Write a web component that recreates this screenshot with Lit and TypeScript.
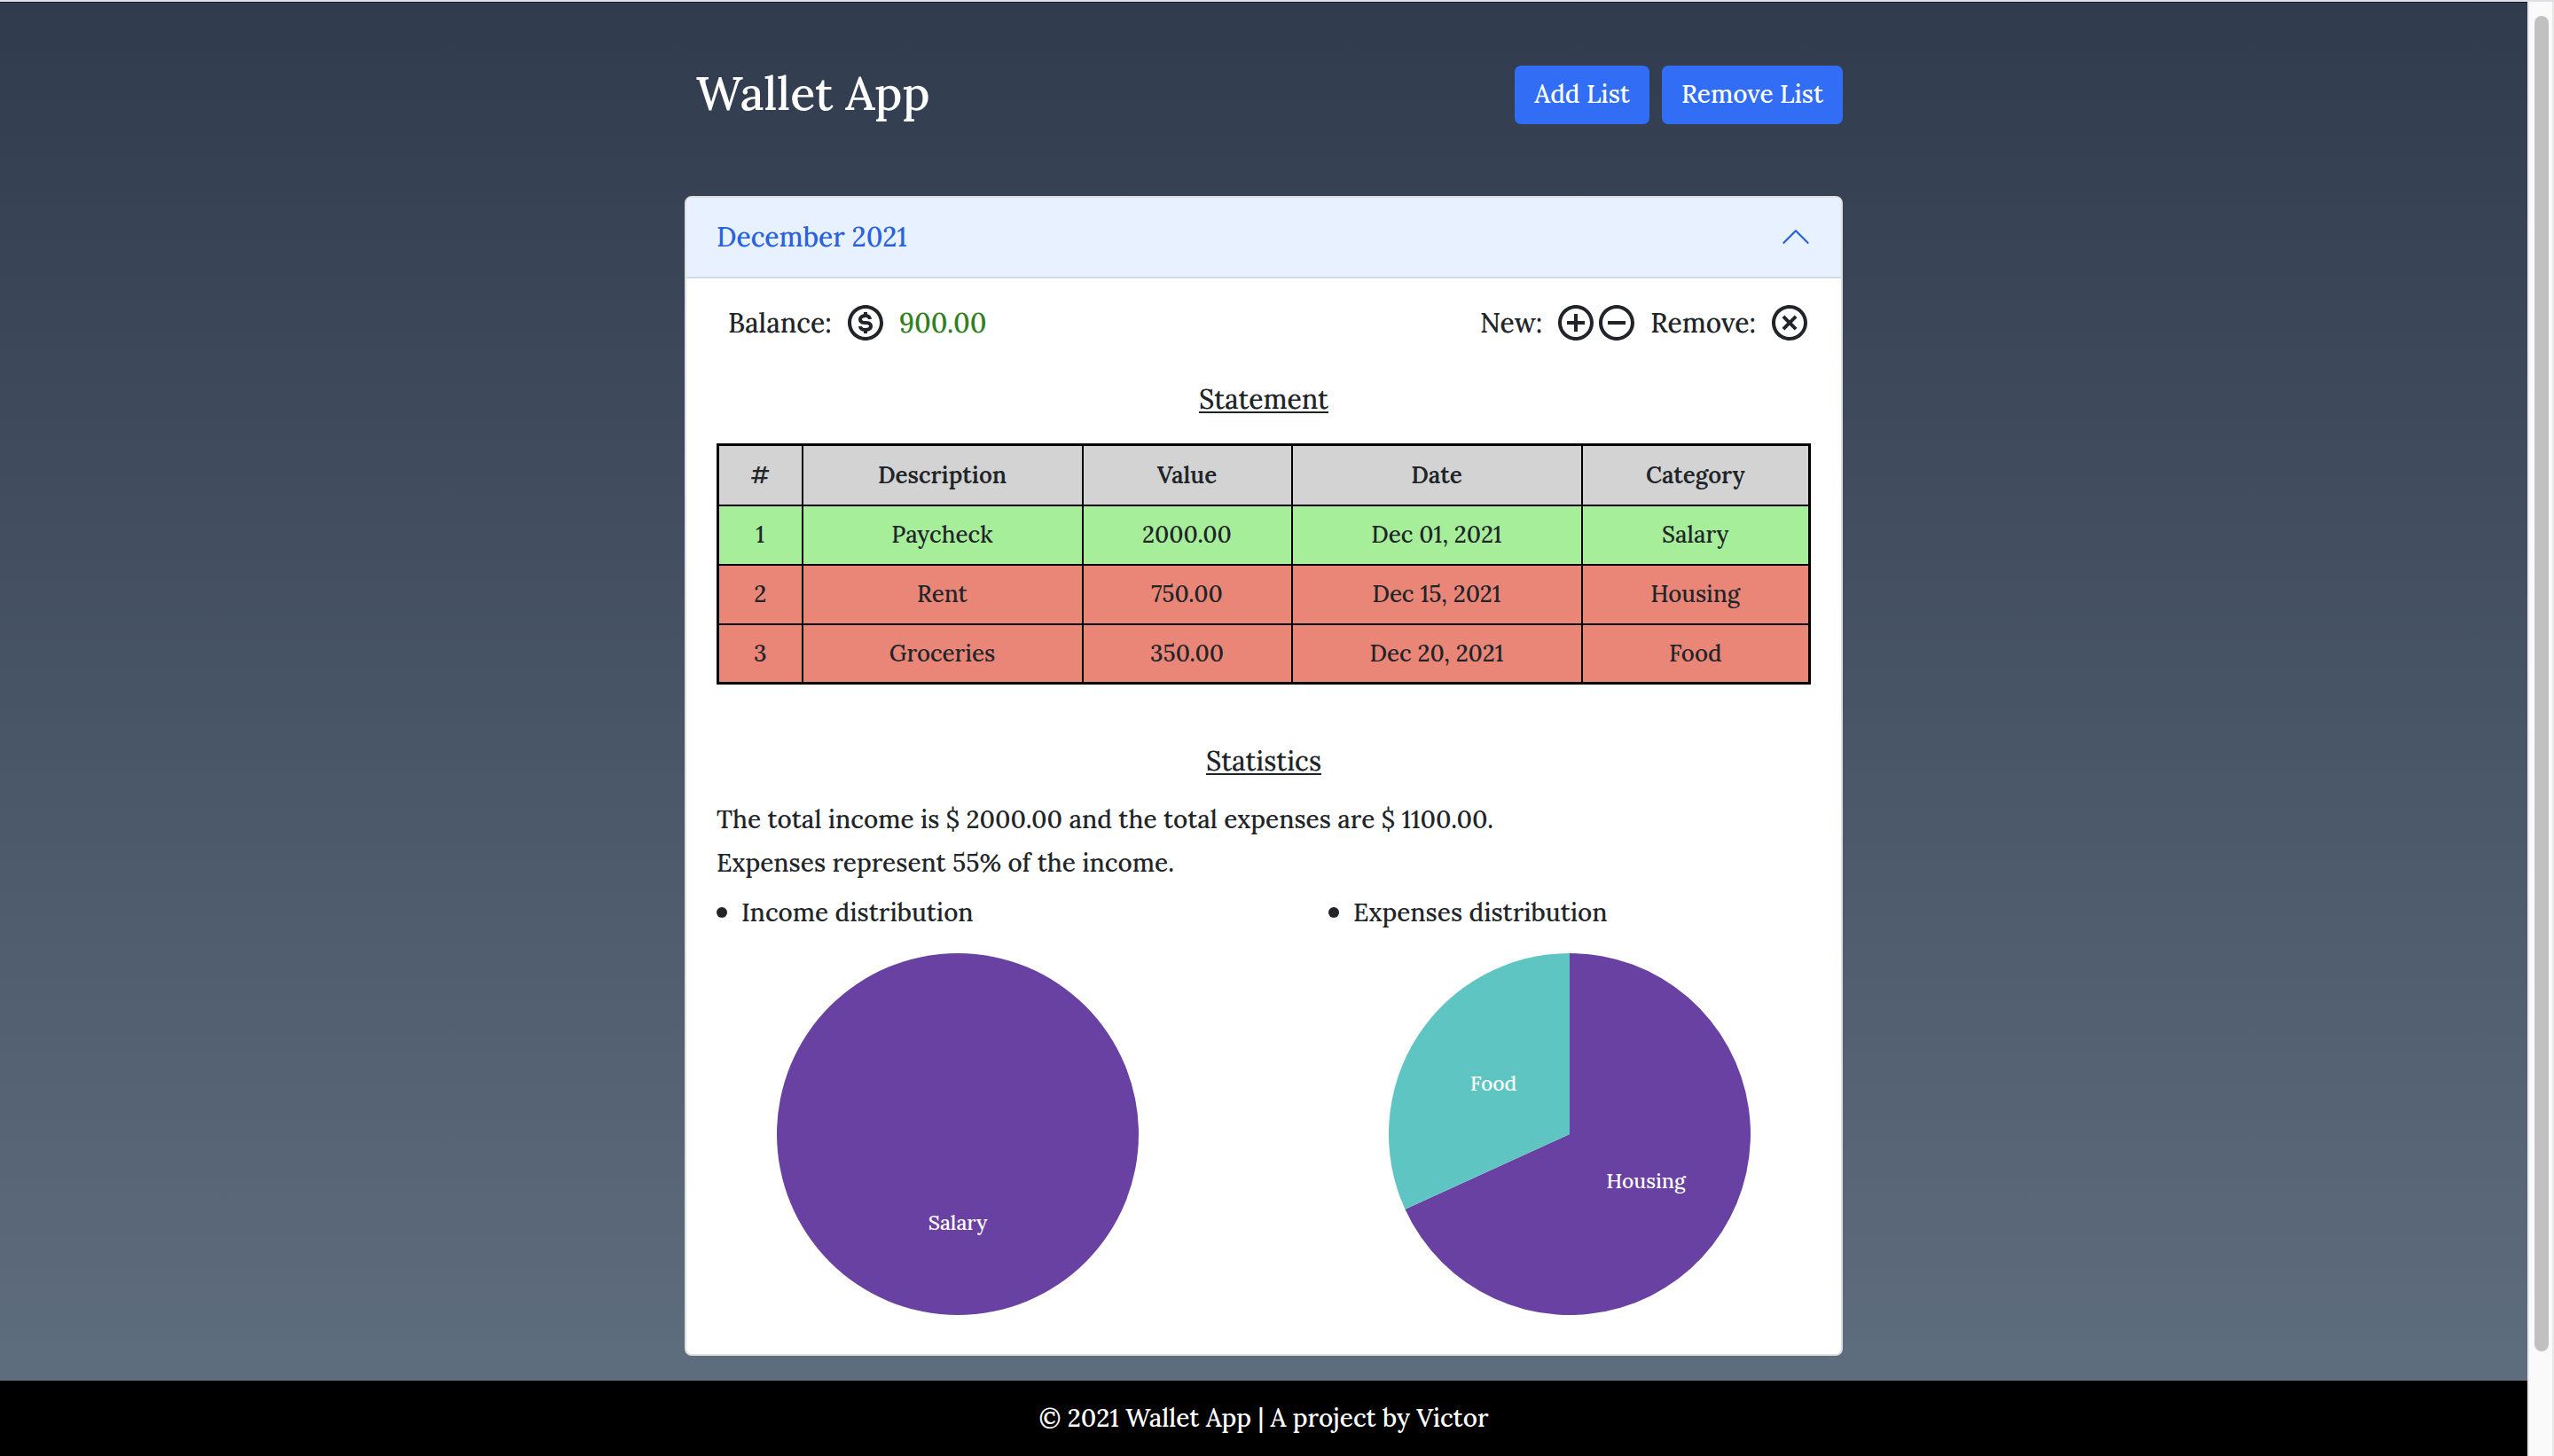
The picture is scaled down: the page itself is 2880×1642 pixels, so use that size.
import { LitElement, html, css, svg } from "lit";
import { customElement, property, state } from "lit/decorators.js";

interface Entry {
  description: string;
  value: number;
  date: string;
  category: string;
  kind: "income" | "expense";
}

interface Slice {
  label: string;
  value: number;
}

const PIE_COLORS = ["#6841a3", "#5fc5c2"];

const ICONS = {
  dollar:
    "M12 11c-2 0-2-.63-2-1s.7-1 2-1 1.39.64 1.4 1h2A3 3 0 0 0 13 7.12V6h-2v1.09C9 7.42 8 8.71 8 10c0 1.12.52 3 4 3 2 0 2 .68 2 1s-.62 1-2 1c-1.84 0-2-.86-2-1H8c0 .92.66 2.55 3 2.92V18h2v-1.08c2-.34 3-1.63 3-2.92 0-1.12-.52-3-4-3z",
  plus: "M13 7h-2v4H7v2h4v4h2v-4h4v-2h-4z",
  minus: "M7 11h10v2H7z",
  cross:
    "M9.172 16.242 12 13.414l2.828 2.828 1.414-1.414L13.414 12l2.828-2.828-1.414-1.414L12 10.586 9.172 7.758 7.758 9.172 10.586 12l-2.828 2.828z",
};

@customElement("circle-icon")
export class CircleIcon extends LitElement {
  static styles = css`
    :host {
      display: block;
      width: 40px;
      height: 40px;
    }
    .icon {
      display: block;
      width: 100%;
      height: 100%;
      fill: currentColor;
    }
  `;

  @property() name: keyof typeof ICONS = "plus";

  render() {
    return html`<svg class="icon" viewBox="2 2 20 20" aria-hidden="true">
      <path
        d="M12 2C6.486 2 2 6.486 2 12s4.486 10 10 10 10-4.486 10-10S17.514 2 12 2zm0 18c-4.411 0-8-3.589-8-8s3.589-8 8-8 8 3.589 8 8-3.589 8-8 8z"
      ></path>
      <path d=${ICONS[this.name]}></path>
    </svg>`;
  }
}

@customElement("pie-chart")
export class PieChart extends LitElement {
  static styles = css`
    :host {
      display: block;
      width: 408px;
      max-width: 100%;
    }
    .pie {
      display: block;
      width: 100%;
    }
    .label {
      fill: #fff;
      font-size: 23px;
      text-anchor: middle;
    }
  `;

  @property({ attribute: false }) slices: Slice[] = [];

  render() {
    const total = this.slices.reduce((sum, s) => sum + s.value, 0);
    const radius = 204;
    const point = (turn: number, r: number) => [
      r * Math.sin(turn * 2 * Math.PI),
      -r * Math.cos(turn * 2 * Math.PI),
    ];
    let turn = 0;
    const parts = this.slices.map((slice, i) => {
      const share = slice.value / total;
      const [x1, y1] = point(turn, radius);
      const [x2, y2] = point(turn + share, radius);
      const [lx, ly] = point(turn + share / 2, radius / 2);
      turn += share;
      const fill = PIE_COLORS[i % PIE_COLORS.length];
      const shape =
        share === 1
          ? svg`<circle r=${radius} fill=${fill}></circle>`
          : svg`<path fill=${fill} d=${`M0 0L${x1} ${y1}A${radius} ${radius} 0 ${
              share > 0.5 ? 1 : 0
            } 1 ${x2} ${y2}Z`}></path>`;
      return svg`${shape}<text class="label" x=${Math.round(lx)} y=${Math.round(ly) + 6}>${slice.label}</text>`;
    });
    return html`<svg class="pie" viewBox="-204 -204 408 408" role="img">${parts}</svg>`;
  }
}

@customElement("app-root")
export class AppRoot extends LitElement {
  static styles = css`
    :host {
      display: flex;
      flex-direction: column;
      min-height: 100vh;
      font-family: Lora, "Liberation Serif", serif;
      font-size: 28px;
      font-weight: 500;
      line-height: 48px;
      color: #212529;
    }
    * {
      box-sizing: border-box;
    }
    h1,
    h2,
    h3,
    p,
    ul {
      margin: 0;
      padding: 0;
      font-weight: 500;
    }
    button {
      margin: 0;
      padding: 0;
      border: 0;
      background: none;
      color: inherit;
      font: inherit;
      cursor: pointer;
    }
    .edge {
      height: 2px;
      background: #dedfe7;
    }
    .window {
      flex: 1;
      display: flex;
    }
    .page {
      flex: 1;
      display: flex;
      flex-direction: column;
      border-top: 1px solid #101a2e;
      background: linear-gradient(#303b4e, #617081);
    }
    .content {
      flex: 1;
      width: 100%;
      max-width: 1306px;
      margin: 0 auto;
      padding: 71px 0 28px;
    }
    .top {
      display: flex;
      align-items: center;
      justify-content: space-between;
      margin-bottom: 81px;
    }
    .title {
      padding: 0 0 4px 13px;
      font-size: 52px;
      line-height: 60px;
      color: #fff;
    }
    .actions {
      display: flex;
      gap: 14px;
    }
    .action {
      padding: 8px 22px 10px;
      border-radius: 7px;
      background: #316df5;
      color: #fff;
    }
    .card {
      overflow: hidden;
      border: 2px solid #dfdfdf;
      border-radius: 8px;
      background: #fff;
    }
    .month {
      display: flex;
      align-items: center;
      justify-content: space-between;
      width: 100%;
      padding: 20px 34px 21px;
      border-bottom: 2px solid #d2dbe9;
      background: #e7f1ff;
      color: #2a61dd;
      font-size: 30px;
    }
    .chevron {
      width: 36px;
      height: 36px;
      margin-right: -1px;
      fill: none;
      stroke: currentColor;
      stroke-width: 1;
      stroke-linecap: round;
      stroke-linejoin: round;
    }
    .body {
      padding: 30px 34px 44px;
    }
    .summary {
      display: flex;
      align-items: center;
      justify-content: space-between;
      padding: 0 4px 0 13px;
      font-size: 30px;
      line-height: 40px;
    }
    .group {
      display: flex;
      align-items: center;
      gap: 18px;
    }
    .pair {
      display: flex;
      gap: 6px;
    }
    .amount {
      color: #31801f;
    }
    .heading {
      text-align: center;
      text-decoration: underline;
      text-decoration-thickness: 2px;
      text-underline-offset: 3px;
      font-size: 30px;
    }
    .statement {
      margin: 42px 0 26px;
    }
    .statistics {
      margin: 62px 0 18px;
    }
    .table {
      width: 100%;
      table-layout: fixed;
      border-collapse: collapse;
      border: 3px solid #000;
      text-align: center;
      font-size: 26px;
    }
    .table th,
    .table td {
      height: 67px;
      padding: 0;
      border: 2px solid #000;
    }
    .table th {
      height: 68px;
      background: #d3d3d3;
      font-weight: 600;
    }
    .num {
      width: 95px;
    }
    .desc {
      width: 316px;
    }
    .val {
      width: 236px;
    }
    .day {
      width: 327px;
    }
    .income {
      background: #a6ee9a;
    }
    .expense {
      background: #ea8677;
    }
    .line {
      line-height: 49px;
    }
    .charts {
      display: flex;
      flex-wrap: wrap;
      justify-content: space-between;
      margin-top: 7px;
      list-style: none;
    }
    .chart {
      display: flex;
      flex-direction: column;
      align-items: center;
      gap: 22px;
      width: 544px;
    }
    .caption {
      display: flex;
      align-items: center;
      align-self: stretch;
      gap: 16px;
    }
    .caption::before {
      content: "";
      width: 12px;
      height: 12px;
      border-radius: 50%;
      background: currentColor;
    }
    .footer {
      padding: 18px 0 19px;
      background: #000;
      color: #fff;
      text-align: center;
    }
    .scroll {
      display: flex;
      width: 30px;
      padding: 16px 4px 118px 6px;
      border: solid #e8e8e8;
      border-width: 0 2px;
      background: #fafafa;
    }
    .thumb {
      flex: 1;
      border-radius: 8px;
      background: #c1c1c1;
    }
  `;

  @state() private open = true;

  private entries: Entry[] = [
    { description: "Paycheck", value: 2000, date: "Dec 01, 2021", category: "Salary", kind: "income" },
    { description: "Rent", value: 750, date: "Dec 15, 2021", category: "Housing", kind: "expense" },
    { description: "Groceries", value: 350, date: "Dec 20, 2021", category: "Food", kind: "expense" },
  ];

  private slices(kind: Entry["kind"]): Slice[] {
    return this.entries
      .filter((e) => e.kind === kind)
      .map((e) => ({ label: e.category, value: e.value }));
  }

  private renderBody() {
    const sum = (slices: Slice[]) => slices.reduce((t, s) => t + s.value, 0);
    const incomeSlices = this.slices("income");
    const expenseSlices = this.slices("expense");
    const income = sum(incomeSlices);
    const expenses = sum(expenseSlices);
    return html`<div class="body">
      <div class="summary">
        <div class="group">
          <span>Balance:</span>
          <circle-icon name="dollar"></circle-icon>
          <span class="amount">${(income - expenses).toFixed(2)}</span>
        </div>
        <div class="group">
          <span>New:</span>
          <div class="pair">
            <button aria-label="New income"><circle-icon name="plus"></circle-icon></button>
            <button aria-label="New expense"><circle-icon name="minus"></circle-icon></button>
          </div>
          <span>Remove:</span>
          <button aria-label="Remove entry"><circle-icon name="cross"></circle-icon></button>
        </div>
      </div>
      <h3 class="heading statement">Statement</h3>
      <table class="table">
        <thead>
          <tr>
            <th class="num" scope="col">#</th>
            <th class="desc" scope="col">Description</th>
            <th class="val" scope="col">Value</th>
            <th class="day" scope="col">Date</th>
            <th scope="col">Category</th>
          </tr>
        </thead>
        <tbody>
          ${this.entries.map(
            (e, i) => html`<tr class=${e.kind}>
              <td>${i + 1}</td>
              <td>${e.description}</td>
              <td>${e.value.toFixed(2)}</td>
              <td>${e.date}</td>
              <td>${e.category}</td>
            </tr>`
          )}
        </tbody>
      </table>
      <h3 class="heading statistics">Statistics</h3>
      <p class="line">
        The total income is $ ${income.toFixed(2)} and the total expenses are $ ${expenses.toFixed(2)}.
      </p>
      <p class="line">Expenses represent ${Math.round((expenses / income) * 100)}% of the income.</p>
      <ul class="charts">
        <li class="chart">
          <span class="caption">Income distribution</span>
          <pie-chart .slices=${incomeSlices}></pie-chart>
        </li>
        <li class="chart">
          <span class="caption">Expenses distribution</span>
          <pie-chart .slices=${expenseSlices}></pie-chart>
        </li>
      </ul>
    </div>`;
  }

  render() {
    return html`
      <div class="edge"></div>
      <div class="window">
        <div class="page">
          <main class="content">
            <header class="top">
              <h1 class="title">Wallet App</h1>
              <div class="actions">
                <button class="action">Add List</button>
                <button class="action">Remove List</button>
              </div>
            </header>
            <section class="card">
              <h2>
                <button
                  class="month"
                  aria-expanded=${this.open ? "true" : "false"}
                  @click=${() => (this.open = !this.open)}
                >
                  <span>December 2021</span>
                  <svg class="chevron" viewBox="0 0 16 16" aria-hidden="true">
                    <path d=${this.open ? "M2 11L8 5L14 11" : "M2 5L8 11L14 5"}></path>
                  </svg>
                </button>
              </h2>
              ${this.open ? this.renderBody() : null}
            </section>
          </main>
          <footer class="footer">© 2021 Wallet App | A project by Victor</footer>
        </div>
        <div class="scroll"><div class="thumb"></div></div>
      </div>
    `;
  }
}
